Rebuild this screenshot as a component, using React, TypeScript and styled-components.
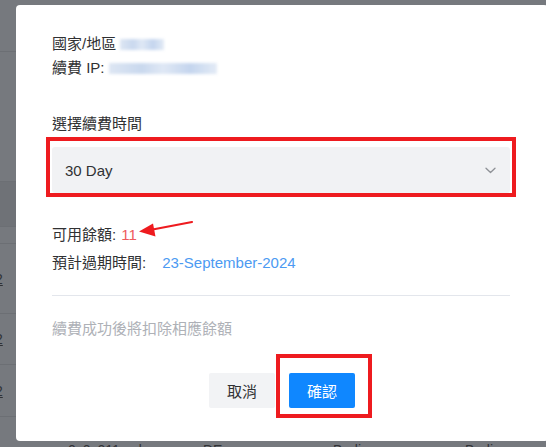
import React from "react";
import styled, { createGlobalStyle } from "styled-components";

const Global = createGlobalStyle`
  html, body { margin: 0; padding: 0; }
  body { font-family: "Liberation Sans", "Noto Sans CJK TC", sans-serif; background: #76797e; }
`;

const Page = styled.div`
  position: relative;
  width: 546px;
  height: 447px;
  overflow: hidden;
  background: #76797e;
`;

const Table = styled.div`
  display: flex;
  flex-direction: column;
`;

const Row = styled.div<{ $h: number; $dark?: boolean }>`
  height: ${(p) => p.$h}px;
  box-sizing: border-box;
  border-bottom: 1px solid #6c6f74;
  background: ${(p) => (p.$dark ? "#6f7277" : "transparent")};
  display: flex;
  align-items: center;
  font-size: 14px;
  color: #2f3236;
`;

const EdgeDigit = styled.span`
  margin-left: -5px;
  text-decoration: underline;
`;

const LastRow = styled.div`
  display: flex;
  padding-top: 25px;
  font-size: 14px;
  color: #303236;
`;

const Cell = styled.span<{ $w: number }>`
  width: ${(p) => p.$w}px;
  flex: none;
`;

const Modal = styled.div`
  position: absolute;
  left: 16px;
  top: 5px;
  width: 532px;
  height: 436px;
  box-sizing: border-box;
  background: #fff;
  border-radius: 4px;
  padding: 27px 38px 0 36px;
  display: flex;
  flex-direction: column;
  color: #303133;
  font-size: 15px;
`;

const InfoLine = styled.div`
  line-height: 24px;
  height: 24px;
  display: flex;
  align-items: center;
`;

const Blur = styled.span<{ $w: number }>`
  display: inline-block;
  width: ${(p) => p.$w}px;
  height: 11px;
  margin-left: 4px;
  background: linear-gradient(90deg, #dde6f3, #c9d8ee 30%, #dfe8f5 50%, #c4d5ee 75%, #e3ebf6);
  filter: blur(1.5px);
`;

const Label = styled.div`
  margin-top: 32px;
  line-height: 24px;
`;

const Select = styled.div`
  margin-top: 11px;
  height: 46px;
  background: #f1f2f4;
  border-radius: 3px;
  display: flex;
  align-items: center;
  justify-content: space-between;
  padding: 0 14px 0 13px;
  font-size: 15px;
  color: #303133;
`;

const Summary = styled.div`
  margin-top: 28px;
  display: flex;
  flex-direction: column;
`;

const SumLine = styled.div`
  line-height: 28px;
  height: 28px;
`;

const Balance = styled.span`
  color: #ee5a5c;
  margin-left: 1px;
`;

const DateText = styled.span`
  color: #4c9af2;
  margin-left: 16px;
`;

const Divider = styled.div`
  margin-top: 18px;
  height: 1px;
  background: #e3e6ec;
`;

const Note = styled.div`
  margin-top: 21px;
  line-height: 24px;
  color: #aeb1b7;
`;

const Actions = styled.div`
  margin-top: 32px;
  display: flex;
  justify-content: center;
  gap: 14px;
  padding-left: 2px;
`;

const Button = styled.button<{ $primary?: boolean }>`
  width: 66px;
  height: 35px;
  border: none;
  border-radius: 2px;
  font-family: inherit;
  font-size: 15px;
  background: ${(p) => (p.$primary ? "#0f87ff" : "#f2f3f5")};
  color: ${(p) => (p.$primary ? "#fff" : "#303133")};
  padding: 0;
`;

const RedBox = styled.div<{ $l: number; $t: number; $w: number; $h: number }>`
  position: absolute;
  left: ${(p) => p.$l}px;
  top: ${(p) => p.$t}px;
  width: ${(p) => p.$w}px;
  height: ${(p) => p.$h}px;
  box-sizing: border-box;
  border: 4px solid #ee1b1f;
  pointer-events: none;
`;

const Arrow = styled.svg`
  position: absolute;
  left: 136px;
  top: 214px;
`;

const Chevron = () => (
  <svg width="11" height="7" viewBox="0 0 11 7" fill="none">
    <path d="M1 1.2 L5.5 5.5 L10 1.2" stroke="#8e9196" strokeWidth="1.3" strokeLinecap="round" strokeLinejoin="round" />
  </svg>
);

export default function App() {
  return (
    <>
      <Global />
      <Page>
        <Table>
          <Row $h={52} />
          <Row $h={130} />
          <Row $h={45} $dark />
          <Row $h={17} />
          <Row $h={70}><EdgeDigit>2</EdgeDigit></Row>
          <Row $h={51}><EdgeDigit>2</EdgeDigit></Row>
          <Row $h={52}><EdgeDigit>2</EdgeDigit></Row>
          <LastRow>
            <Cell $w={68} />
            <Cell $w={135}>0x0c011ssd</Cell>
            <Cell $w={130}>DE</Cell>
            <Cell $w={132}>Berlin</Cell>
            <Cell $w={60}>Berlin</Cell>
          </LastRow>
        </Table>

        <Modal>
          <InfoLine>國家/地區<Blur $w={44} /></InfoLine>
          <InfoLine>續費 IP:<Blur $w={108} /></InfoLine>
          <Label>選擇續費時間</Label>
          <Select>
            <span>30 Day</span>
            <Chevron />
          </Select>
          <Summary>
            <SumLine>可用餘額: <Balance>11</Balance></SumLine>
            <SumLine>預計過期時間:<DateText>23-September-2024</DateText></SumLine>
          </Summary>
          <Divider />
          <Note>續費成功後將扣除相應餘額</Note>
          <Actions>
            <Button>取消</Button>
            <Button $primary>確認</Button>
          </Actions>
        </Modal>

        <RedBox $l={46} $t={137} $w={470} $h={60} />
        <RedBox $l={276} $t={354} $w={96} $h={64} />
        <Arrow width="62" height="28" viewBox="0 0 62 28">
          <path d="M56 8 L14 16" stroke="#ee1b1f" strokeWidth="2.2" strokeLinecap="round" />
          <path d="M3 17.5 L17 9.5 L19.5 22.5 Z" fill="#ee1b1f" />
        </Arrow>
      </Page>
    </>
  );
}
